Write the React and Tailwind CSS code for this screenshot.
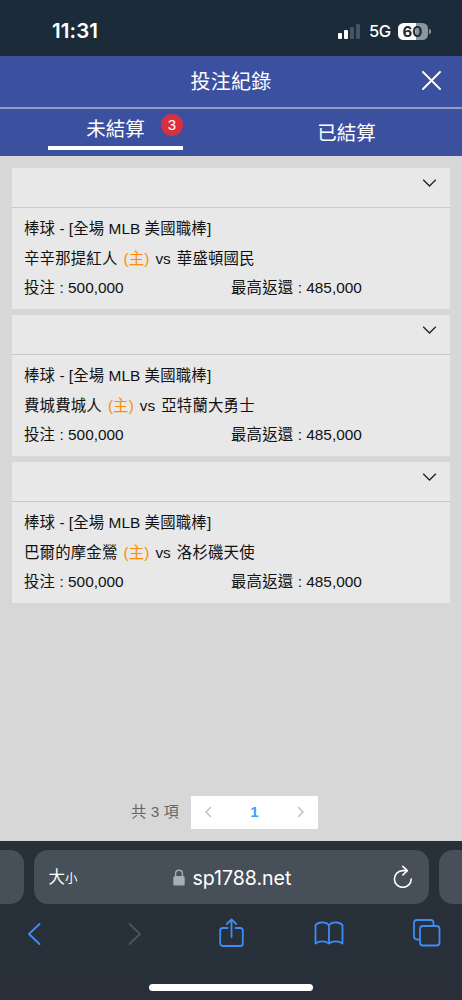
import { Fragment } from 'react';

const bets = [
  { id: 1, home: '辛辛那提紅人', away: '華盛頓國民', stake: '500,000', payout: '485,000' },
  { id: 2, home: '費城費城人', away: '亞特蘭大勇士', stake: '500,000', payout: '485,000' },
  { id: 3, home: '巴爾的摩金鶯', away: '洛杉磯天使', stake: '500,000', payout: '485,000' },
];

// Chinese runs are set a little wider than the latin text around them
function Mixed({ text }) {
  return text.split(/([\u4e00-\u9fff]+)/).map((part, i) => (
    i % 2 ? <span key={i} className="tracking-[0.2px]">{part}</span> : <Fragment key={i}>{part}</Fragment>
  ));
}

function StatusBar() {
  return (
    <div className="flex h-14 shrink-0 items-start justify-between bg-[#1b2b3a] pl-[52px] pr-[31px] pt-[19px] font-['Inter',sans-serif] text-white">
      <span className="text-[20.5px] font-semibold leading-6 tracking-[0.1px]">11:31</span>
      <div className="flex h-6 items-center">
        <div className="mr-[7px] flex h-[15px] items-end gap-[2px] -translate-x-[2px]">
          <span className="h-[6px] w-[4px] rounded-[1px] bg-white"></span>
          <span className="h-[9px] w-[4px] rounded-[1px] bg-white"></span>
          <span className="h-[12px] w-[4px] rounded-[1px] bg-[#475461]"></span>
          <span className="h-[15px] w-[4px] rounded-[1px] bg-[#475461]"></span>
        </div>
        <span className="w-[22px] text-[16.5px] font-medium leading-6 tracking-[-0.4px]">5G</span>
        <div className="ml-[7px] flex h-[17px] w-[30px] items-center justify-center rounded-[5.5px] bg-linear-to-r from-white from-60% to-[#8d959d] to-60% pr-px text-[15px] font-bold leading-none text-[#1b2b3a]">60</div>
        <span className="ml-[1px] h-[5px] w-[2px] rounded-r-full bg-[#8d959d]"></span>
      </div>
    </div>
  );
}

function BetCard({ bet }) {
  return (
    <div className="h-[141px] bg-[#e8e8e8] text-[15.4px] text-[#111]">
      <div className="flex h-10 justify-end border-b border-[#c8c8c8] pr-[13px] pt-[9px]">
        <svg className="h-3 w-[15px]" viewBox="0 0 15 12" fill="none" stroke="#222" strokeWidth="1.3">
          <path d="M1.2 2.8 7.5 9l6.3-6.2" />
        </svg>
      </div>
      <div className="px-3 pt-[6px] leading-[29.7px]">
        <p className="whitespace-nowrap"><Mixed text="棒球 - [全場 MLB 美國職棒]" /></p>
        <p className="flex whitespace-nowrap">
          <Mixed text={bet.home} />
          <span className="ml-[6px] text-[#ff8c00]"><Mixed text="(主)" /></span>
          <span className="ml-[6px] mr-[6px]">vs</span>
          <Mixed text={bet.away} />
        </p>
        <div className="grid grid-cols-2">
          <span className="whitespace-nowrap"><Mixed text={`投注 : ${bet.stake}`} /></span>
          <span className="whitespace-nowrap"><Mixed text={`最高返還 : ${bet.payout}`} /></span>
        </div>
      </div>
    </div>
  );
}

function Pagination() {
  return (
    <div className="flex h-[33px] items-center pl-[131px]">
      <span className="w-[60px] whitespace-nowrap text-[15.3px] text-[#666]"><Mixed text="共 3 項" /></span>
      <div className="flex h-full w-[127px] items-center justify-between bg-white px-[13px]">
        <svg className="-mt-px h-3 w-2" viewBox="0 0 8 12" fill="none" stroke="#bfc3ca" strokeWidth="1.5"><path d="M7 1 2 6l5 5" /></svg>
        <span className="text-[15px] font-bold text-[#409eff]">1</span>
        <svg className="-mt-px h-3 w-2" viewBox="0 0 8 12" fill="none" stroke="#bfc3ca" strokeWidth="1.5"><path d="m1 1 5 5-5 5" /></svg>
      </div>
    </div>
  );
}

function BrowserBar() {
  return (
    <div className="h-[159px] shrink-0 overflow-hidden bg-linear-to-b from-[#27313a] to-[#282f38] pt-[9px]">
      <div className="flex h-[54px] justify-between">
        <div className="w-[23.5px] rounded-r-[14px] bg-[#474f58]"></div>
        <div className="flex w-[395px] items-center rounded-[14px] bg-[#474f58] pl-[15px] pr-[16px] text-white">
          <span className="flex w-[124px] items-baseline pt-px font-medium leading-none">
            <span className="text-[16.5px] font-normal">大</span>
            <span className="text-[12.5px] font-normal">小</span>
          </span>
          <svg className="h-[17px] w-3" viewBox="0 0 12 17" fill="none">
            <rect x="0.3" y="7" width="11.4" height="9.5" rx="1.6" fill="#a9adb4" />
            <path d="M2.6 8V4.6a3.4 3.4 0 0 1 6.8 0V8" stroke="#a9adb4" strokeWidth="1.4" />
          </svg>
          <span className="ml-[8px] flex-1 pt-[3px] font-['Inter',sans-serif] text-[19.5px]">sp1788.net</span>
          <svg className="mb-[2px] h-[23px] w-5" viewBox="0 0 20 23" fill="none" stroke="white" strokeWidth="1.6" strokeLinecap="round" strokeLinejoin="round">
            <path d="M18.2 14a8.4 8.4 0 1 1-8.4-8.4h4.4" />
            <path d="m9.8 1.4 4.500 4.200-4.500 4.400" />
          </svg>
        </div>
        <div className="w-[23.5px] rounded-l-[14px] bg-[#474f58]"></div>
      </div>

      <div className="flex h-[58px] items-center justify-between pl-[27px] pr-[21px]">
        <svg className="mt-px h-6 w-[15px]" viewBox="0 0 15 24" fill="none" stroke="#3f8cf5" strokeWidth="1.9" strokeLinecap="round" strokeLinejoin="round"><path d="M12.5 2 2 12l10.5 10" /></svg>
        <svg className="ml-[2px] mt-px h-6 w-[15px]" viewBox="0 0 15 24" fill="none" stroke="#4c535c" strokeWidth="1.9" strokeLinecap="round" strokeLinejoin="round"><path d="M2.5 2 13 12 2.5 22" /></svg>
        <svg className="-ml-[6px] h-[30px] w-[25px]" viewBox="0 0 25 30" fill="none" stroke="#3f8cf5" strokeWidth="1.8" strokeLinecap="round" strokeLinejoin="round">
          <path d="M8.5 10H3.8A2.6 2.6 0 0 0 1.2 12.6v12.8A2.6 2.6 0 0 0 3.8 28h17.4a2.6 2.6 0 0 0 2.6-2.6V12.6a2.6 2.6 0 0 0-2.6-2.6h-4.7" />
          <path d="M12.5 19V1.5M7.8 6l4.7-4.6L17.2 6" />
        </svg>
        <svg className="-ml-[12px] h-6 w-[30px]" viewBox="0 0 30 24" fill="none" stroke="#3f8cf5" strokeWidth="1.8" strokeLinejoin="round">
          <path d="M15 4.3C12.4.3 4.4.3 1.5 4.2v18.4c3.4-3 10.2-3 13.5 0 3.3-3 10.1-3 13.5 0V4.2C25.6.3 17.6.3 15 4.3v18.3" />
        </svg>
        <svg className="-ml-[14px] h-7 w-7" viewBox="0 0 28 28" fill="none" stroke="#3f8cf5" strokeWidth="1.8">
          <path d="M7 20.5H4a3 3 0 0 1-3-3V4a3 3 0 0 1 3-3h13.5a3 3 0 0 1 3 3v3" />
          <rect x="7" y="7" width="19.5" height="19.5" rx="3" />
        </svg>
      </div>
      <div className="mx-auto mt-[22px] h-[7px] w-[164px] rounded-full bg-white"></div>
    </div>
  );
}

export default function App() {
  return (
    <div className="flex h-[1000px] w-[462px] flex-col overflow-hidden bg-[#d7d7d7] font-['Liberation_Sans','Noto_Sans_CJK_TC',sans-serif]">
      <StatusBar />

      <header className="grid h-[53px] shrink-0 grid-cols-[40px_1fr_40px] items-center border-b-2 border-[#939cba] bg-[#3c50a0] text-white">
        <span></span>
        <h1 className="text-center text-[20px] tracking-[0.2px]">投注紀錄</h1>
        <svg className="-mt-[2px] h-5 w-5" viewBox="0 0 20 20" stroke="white" strokeWidth="1.9" strokeLinecap="round">
          <path d="m1 1 17 17M18 1 1 18" />
        </svg>
      </header>

      <nav className="grid h-[47px] shrink-0 grid-cols-2 bg-[#3c50a0] text-[19.5px] text-white">
        <div className="relative mx-12 flex h-[41px] items-center justify-center border-b-4 border-white pt-[5px]">
          未結算
          <span className="absolute right-0 top-[5px] flex h-[22px] w-[22px] items-center justify-center rounded-full bg-[#d93040] text-[15px]">3</span>
        </div>
        <div className="flex items-center justify-center pt-[2px]">已結算</div>
      </nav>

      <main className="flex flex-1 flex-col justify-between px-3 pb-3 pt-3">
        <div className="flex flex-col gap-[6px]">
          {bets.map((bet) => <BetCard key={bet.id} bet={bet} />)}
        </div>
        <div className="-mx-3">
          <Pagination />
        </div>
      </main>

      <BrowserBar />
    </div>
  );
}
